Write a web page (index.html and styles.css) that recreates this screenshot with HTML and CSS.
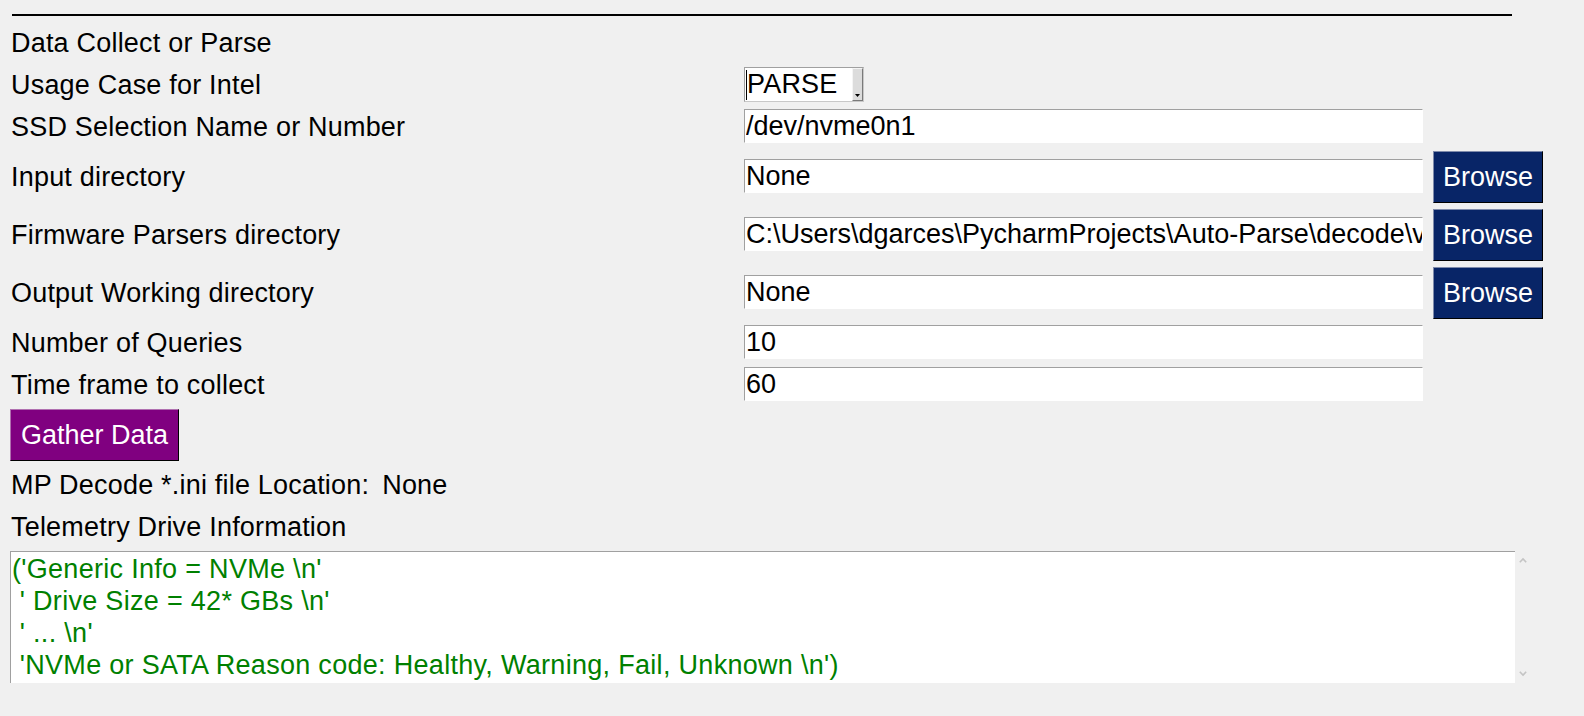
FILE: index.html
```html
<!DOCTYPE html>
<html lang="en">
<head>
<meta charset="utf-8">
<title>Telemetry Parser</title>
<link rel="stylesheet" href="styles.css">
</head>
<body>
<div class="window">
  <div class="sep"></div>
  <div class="form">
    <div class="row"><span class="label">Data Collect or Parse</span></div>
    <div class="row">
      <span class="label">Usage Case for Intel</span>
      <div class="combo">
        <span class="combo-text"><span class="caret"></span>PARSE</span>
        <span class="combo-btn"><svg width="5" height="3" viewBox="0 0 5 3"><polygon points="0,0 5,0 2.5,3" fill="#000"/></svg></span>
      </div>
    </div>
    <div class="row">
      <span class="label">SSD Selection Name or Number</span>
      <input class="entry" type="text" value="/dev/nvme0n1">
    </div>
    <div class="row tall">
      <span class="label">Input directory</span>
      <input class="entry" type="text" value="None">
      <button class="browse">Browse</button>
    </div>
    <div class="row tall">
      <span class="label">Firmware Parsers directory</span>
      <input class="entry" type="text" value="C:\Users\dgarces\PycharmProjects\Auto-Parse\decode\vault\parsers">
      <button class="browse">Browse</button>
    </div>
    <div class="row tall">
      <span class="label">Output Working directory</span>
      <input class="entry" type="text" value="None">
      <button class="browse">Browse</button>
    </div>
    <div class="row">
      <span class="label">Number of Queries</span>
      <input class="entry" type="text" value="10">
    </div>
    <div class="row">
      <span class="label">Time frame to collect</span>
      <input class="entry" type="text" value="60">
    </div>
    <div class="row tall">
      <button class="gather">Gather Data</button>
    </div>
    <div class="row">
      <span class="text">MP Decode *.ini file Location:</span><span class="text value">None</span>
    </div>
    <div class="row"><span class="label">Telemetry Drive Information</span></div>
    <div class="mline-row">
      <div class="mline">('Generic Info = NVMe \n'
 ' Drive Size = 42* GBs \n'
 ' ... \n'
 'NVMe or SATA Reason code: Healthy, Warning, Fail, Unknown \n')</div>
      <div class="vscroll">
        <svg width="8" height="6" viewBox="0 0 8 6"><polyline points="0.8,5.2 4,2 7.2,5.2" fill="none" stroke="#c4c4c4" stroke-width="1.6"/></svg>
        <svg width="8" height="6" viewBox="0 0 8 6"><polyline points="0.8,0.8 4,4 7.2,0.8" fill="none" stroke="#c4c4c4" stroke-width="1.6"/></svg>
      </div>
    </div>
  </div>
</div>
</body>
</html>
```
FILE: styles.css
```css
* {
  box-sizing: border-box;
}

body {
  margin: 0;
  background: #f0f0f0;
  font-family: "Liberation Sans", Arial, sans-serif;
  font-size: 27px;
  letter-spacing: 0.2px;
  color: #000;
}

.window {
  padding: 14px 0 0 10px;
}

.sep {
  width: 1500px;
  height: 2px;
  margin-left: 2px;
  background: #000;
}

.form {
  display: flex;
  flex-direction: column;
  gap: 6px;
  margin-top: 9px;
}

.row {
  display: flex;
  align-items: center;
  height: 36px;
}

.row.tall {
  height: 52px;
}

.label {
  flex: 0 0 734px;
  padding-left: 1px;
  line-height: 36px;
  white-space: nowrap;
}

.text {
  padding-left: 1px;
  line-height: 36px;
  white-space: nowrap;
}

.text.value {
  margin-left: 12px;
}

.entry {
  align-self: flex-start;
  width: 679px;
  height: 34px;
  margin: 0;
  padding: 0 0 0 1px;
  border: 1px solid;
  border-color: #a0a0a0 #ffffff #ffffff #a0a0a0;
  background: #fff;
  font: inherit;
  color: #000;
  outline: none;
}

.row.tall .entry {
  margin-top: 8px;
}

.combo {
  align-self: flex-start;
  display: flex;
  width: 120px;
  height: 35px;
  border: 1px solid #a0a0a0;
  border-right-color: #c8c8c8;
  border-bottom-color: #c8c8c8;
  background: #fff;
}

.combo-text {
  flex: 1;
  display: flex;
  align-items: center;
  line-height: 33px;
  white-space: nowrap;
  overflow: hidden;
}

.caret {
  display: inline-block;
  width: 1px;
  height: 30px;
  margin-left: 1px;
  background: #000;
}

.combo-btn {
  width: 11px;
  height: 33px;
  display: flex;
  flex-direction: column;
  justify-content: flex-end;
  align-items: center;
  padding-bottom: 3px;
  background: #dcdcdc;
  border-right: 1px solid #7a7a7a;
  border-bottom: 1px solid #7a7a7a;
  border-top: 1px solid #f4f4f4;
  border-left: 1px solid #f4f4f4;
}

.combo-btn svg {
  display: block;
}

.browse {
  width: 110px;
  height: 52px;
  margin: 0 0 0 10px;
  padding: 0;
  background: #082567;
  color: #fff;
  border: 1px solid;
  border-color: #7f8bab #000 #000 #7f8bab;
  font: inherit;
  line-height: 1;
}

.gather {
  height: 52px;
  margin: 0;
  padding: 0 10px;
  background: #800080;
  color: #fff;
  border: 1px solid;
  border-color: #b070b0 #000 #000 #b070b0;
  font: inherit;
  line-height: 1;
}

.mline-row {
  display: flex;
  height: 132px;
}

.mline {
  width: 1505px;
  height: 132px;
  padding: 1px 0 0 1px;
  background: #fff;
  border-top: 1px solid #a0a0a0;
  border-left: 1px solid #a0a0a0;
  color: #008000;
  line-height: 32px;
  letter-spacing: 0.3px;
  white-space: pre;
  overflow: hidden;
}

.vscroll {
  width: 17px;
  display: flex;
  flex-direction: column;
  justify-content: space-between;
  align-items: flex-start;
  padding: 6px 0 6px 4px;
}

.vscroll svg {
  display: block;
}
```
